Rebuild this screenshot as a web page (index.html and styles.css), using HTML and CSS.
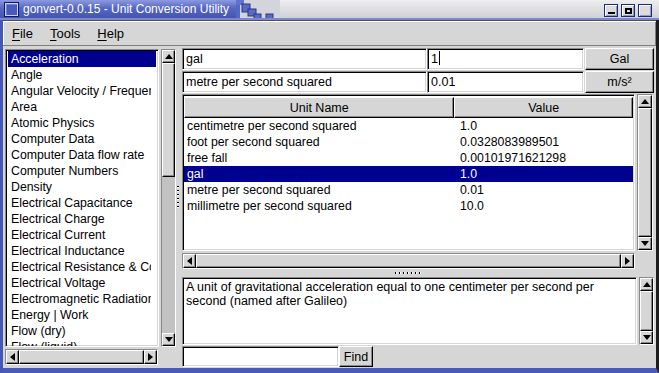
FILE: index.html
```html
<!DOCTYPE html>
<html lang="en">

<head>
    <meta charset="UTF-8">
    <meta name="viewport" content="width=device-width, initial-scale=1.0">
    <title>gonvert</title>
    <link rel="stylesheet" href="styles.css">
</head>

<body>
    <div class="window">
        <div class="titlebar">
            <div class="title-blue">
                <svg class="app-icon" width="15" height="15" viewBox="0 0 15 15">
                    <rect x="0.5" y="0.5" width="14" height="14" fill="#3a4aa8" stroke="#101860" />
                    <rect x="1.5" y="1.5" width="12" height="12" fill="#7080d8" stroke="#c8d0f4" />
                    <rect x="3" y="3" width="10" height="10" fill="#4a5abc" />
                </svg>
                <span class="title-text">gonvert-0.0.15 - Unit Conversion Utility</span>
            </div>
            <svg class="title-steps" width="44" height="20" viewBox="0 0 44 20">
                <rect x="0" y="0" width="44" height="20" fill="#d4d4dc" />
                <rect x="0" y="0" width="4" height="20" fill="#5666c4" />
                <rect x="0" y="0" width="8" height="5" fill="#6272cc" />
                <rect x="6" y="4" width="8" height="8" fill="#5a6ac6" stroke="#2a3680" />
                <rect x="12" y="9" width="8" height="7" fill="#5a6ac6" stroke="#2a3680" />
                <rect x="18" y="14" width="7" height="5" fill="#5a6ac6" stroke="#2a3680" />
                <rect x="30" y="14" width="7" height="5" fill="#5a6ac6" stroke="#2a3680" />
                <rect x="0" y="18" width="44" height="2" fill="#7a88cc" />
            </svg>
            <div class="title-grey">
                <span class="wbtn"><i class="glyph-min"></i></span>
                <span class="wbtn"><i class="glyph-max"></i></span>
                <span class="wbtn"></span>
            </div>
        </div>

        <div class="menubar">
            <span class="menu-item"><u>F</u>ile</span>
            <span class="menu-item"><u>T</u>ools</span>
            <span class="menu-item"><u>H</u>elp</span>
        </div>

        <div class="main">
            <div class="cat-pane">
                <div class="cat-top">
                    <ul class="list sunken">
                        <li class="selected"><span>Acceleration</span></li>
                        <li><span>Angle</span></li>
                        <li><span>Angular Velocity / Frequency</span></li>
                        <li><span>Area</span></li>
                        <li><span>Atomic Physics</span></li>
                        <li><span>Computer Data</span></li>
                        <li><span>Computer Data flow rate</span></li>
                        <li><span>Computer Numbers</span></li>
                        <li><span>Density</span></li>
                        <li><span>Electrical Capacitance</span></li>
                        <li><span>Electrical Charge</span></li>
                        <li><span>Electrical Current</span></li>
                        <li><span>Electrical Inductance</span></li>
                        <li><span>Electrical Resistance &amp; Conductance</span></li>
                        <li><span>Electrical Voltage</span></li>
                        <li><span>Electromagnetic Radiation</span></li>
                        <li><span>Energy | Work</span></li>
                        <li><span>Flow (dry)</span></li>
                        <li><span>Flow (liquid)</span></li>
                    </ul>
                    <div class="vscroll cat-vscroll">
                        <span class="sb-btn"><i class="tri-up"></i></span>
                        <span class="thumb cat-thumb"></span>
                        <span class="trough"></span>
                        <span class="sb-btn"><i class="tri-down"></i></span>
                    </div>
                </div>
                <div class="hscroll cat-hscroll">
                    <span class="sb-btn"><i class="tri-left"></i></span>
                    <span class="thumb"></span>
                    <span class="sb-btn"><i class="tri-right"></i></span>
                </div>
            </div>

            <div class="vhandle"><span class="dots-v"></span></div>

            <div class="right-pane">
                <div class="conv-row">
                    <div class="entry name-entry">gal</div>
                    <div class="entry value-entry">1<span class="caret"></span></div>
                    <div class="button unit-btn">Gal</div>
                </div>
                <div class="conv-row">
                    <div class="entry name-entry">metre per second squared</div>
                    <div class="entry value-entry">0.01</div>
                    <div class="button unit-btn">m/s²</div>
                </div>

                <div class="table-wrap">
                    <div class="table-box sunken">
                        <div class="thead">
                            <span class="th col-name">Unit Name</span>
                            <span class="th col-value">Value</span>
                        </div>
                        <div class="tr"><span class="col-name">centimetre per second squared</span><span class="col-value">1.0</span></div>
                        <div class="tr"><span class="col-name">foot per second squared</span><span class="col-value">0.0328083989501</span></div>
                        <div class="tr"><span class="col-name">free fall</span><span class="col-value">0.00101971621298</span></div>
                        <div class="tr selected"><span class="col-name">gal</span><span class="col-value">1.0</span></div>
                        <div class="tr"><span class="col-name">metre per second squared</span><span class="col-value">0.01</span></div>
                        <div class="tr"><span class="col-name">millimetre per second squared</span><span class="col-value">10.0</span></div>
                    </div>
                    <div class="vscroll table-vscroll">
                        <span class="sb-btn"><i class="tri-up"></i></span>
                        <span class="thumb"></span>
                        <span class="sb-btn"><i class="tri-down"></i></span>
                    </div>
                </div>
                <div class="hscroll table-hscroll">
                    <span class="sb-btn"><i class="tri-left"></i></span>
                    <span class="thumb"></span>
                    <span class="sb-btn"><i class="tri-right"></i></span>
                </div>

                <div class="hhandle"><span class="dots-h"></span></div>

                <div class="desc-wrap">
                    <div class="desc sunken">A unit of gravitational acceleration equal to one centimeter per second per second (named after Galileo)</div>
                    <div class="vscroll desc-vscroll">
                        <span class="sb-btn"><i class="tri-up"></i></span>
                        <span class="thumb"></span>
                        <span class="sb-btn"><i class="tri-down"></i></span>
                    </div>
                </div>

                <div class="find-row">
                    <div class="entry find-entry"></div>
                    <div class="button find-btn">Find</div>
                </div>
            </div>
        </div>
    </div>
</body>

</html>
```

FILE: styles.css
```css
* {
    margin: 0;
    padding: 0;
    box-sizing: border-box;
}

body {
    width: 659px;
    height: 373px;
    overflow: hidden;
    background: #1c1c1c;
    font-family: "Liberation Sans", Arial, sans-serif;
    font-size: 12px;
    color: #000;
}

.window {
    width: 659px;
    height: 373px;
    display: flex;
    flex-direction: column;
    background: #d6d6d6;
    border-left: 3px solid #4656b4;
    border-right: 3px solid #1c1c1c;
    border-bottom: 5px solid #4a5ab8;
}

/* title bar */
.titlebar {
    flex: 0 0 20px;
    display: flex;
    margin-left: -3px;
    margin-right: -3px;
}

.title-blue {
    flex: 0 0 236px;
    display: flex;
    align-items: center;
    padding-left: 4px;
    overflow: hidden;
    background: linear-gradient(#8c9ae0, #5666c4 45%, #4454b0);
    border-bottom: 2px solid #7a88cc;
}

.app-icon {
    display: block;
    flex: 0 0 15px;
    margin-right: 4px;
}

.title-text {
    flex: 0 0 auto;
    color: #fff;
    font-size: 12px;
    white-space: nowrap;
}

.title-steps {
    display: block;
    flex: 0 0 44px;
}

.title-grey {
    flex: 1;
    display: flex;
    justify-content: flex-end;
    gap: 3px;
    padding: 4px 7px 0 0;
    background: linear-gradient(#eeeeee, #d0d0d8);
    border-bottom: 2px solid #7a88cc;
}

.wbtn {
    width: 14px;
    height: 13px;
    display: flex;
    align-items: center;
    justify-content: center;
    background: #dcdcdc;
    border: 1px solid #1c2a78;
    box-shadow: inset 1px 1px #fff, inset -1px -1px #9098c0;
}

.glyph-min {
    width: 7px;
    height: 2px;
    margin-top: 4px;
    background: #000;
}

.glyph-max {
    width: 7px;
    height: 6px;
    border: 2px solid #000;
}

/* menu */
.menubar {
    flex: 0 0 26px;
    display: flex;
    align-items: center;
    padding-left: 9px;
    border-top: 1px solid #505050;
    border-bottom: 1px solid #808080;
    box-shadow: inset 1px 1px #fff, inset -1px 0 #808080;
}

.menu-item {
    margin-right: 17px;
    font-size: 13px;
}

.menu-item u {
    text-decoration-thickness: 1px;
    text-underline-offset: 2px;
}

/* main */
.main {
    flex: 1;
    display: flex;
    padding: 1px 0 0 2px;
}

.cat-pane {
    width: 171px;
    display: flex;
    flex-direction: column;
    padding-top: 2px;
}

.cat-top {
    height: 298px;
    display: flex;
    gap: 2px;
}

.sunken {
    border: 1px solid;
    border-color: #8a8a8a #fff #fff #8a8a8a;
    box-shadow: inset 1px 1px #000, inset -1px -1px #d6d6d6;
}

.sb-btn,
.thumb,
.button,
.th {
    background: #d6d6d6;
    border: 1px solid;
    border-color: #fff #000 #000 #fff;
    box-shadow: inset -1px -1px #8a8a8a;
}

.list {
    width: 154px;
    list-style: none;
    background: #fff;
    overflow: hidden;
    padding: 1px 2px;
}

.list li {
    height: 16px;
    line-height: 16px;
    padding-left: 3px;
    white-space: nowrap;
    font-size: 12.3px;
}

.list li span {
    display: block;
    width: 140px;
    overflow: hidden;
}

.selected {
    background: #000090;
    color: #fff;
}

/* scrollbars */
.vscroll {
    width: 15px;
    display: flex;
    flex-direction: column;
    background: #c2c2c2;
    border: 1px solid;
    border-color: #8a8a8a #fff #fff #8a8a8a;
}

.hscroll {
    height: 16px;
    display: flex;
    background: #c2c2c2;
    border: 1px solid;
    border-color: #8a8a8a #fff #fff #8a8a8a;
}

.sb-btn {
    flex: 0 0 13px;
    display: flex;
    align-items: center;
    justify-content: center;
}

.vscroll .sb-btn {
    height: 13px;
}

.hscroll .sb-btn {
    width: 14px;
}

.thumb {
    flex: 1;
}

.vscroll .cat-thumb {
    flex: 0 0 114px;
}

.trough {
    flex: 1;
}

.tri-up,
.tri-down,
.tri-left,
.tri-right {
    width: 0;
    height: 0;
    border: 4px solid transparent;
}

.tri-up {
    border-bottom: 5px solid #000;
    border-top-width: 0;
}

.tri-down {
    border-top: 5px solid #000;
    border-bottom-width: 0;
}

.tri-left {
    border-right: 5px solid #000;
    border-left-width: 0;
}

.tri-right {
    border-left: 5px solid #000;
    border-right-width: 0;
}

.cat-hscroll {
    width: 153px;
    margin-top: 2px;
}

/* pane handles */
.vhandle {
    width: 6px;
    display: flex;
    align-items: center;
    justify-content: flex-start;
    padding: 0 0 20px 1px;
}

.dots-v {
    width: 2px;
    height: 24px;
    background: repeating-linear-gradient(#000 0 1px, #fff 1px 2px, transparent 2px 4px);
}

.hhandle {
    height: 8px;
    display: flex;
    align-items: center;
    justify-content: center;
    padding-right: 20px;
}

.dots-h {
    width: 26px;
    height: 2px;
    background: repeating-linear-gradient(90deg, #000 0 1px, #fff 1px 2px, transparent 2px 4px);
}

/* right side */
.right-pane {
    width: 472px;
    display: flex;
    flex-direction: column;
    padding-top: 1px;
}

.conv-row {
    height: 22px;
    display: flex;
    margin-bottom: 1px;
}

.entry {
    background: #fff;
    border: 1px solid;
    border-color: #8a8a8a #fff #fff #8a8a8a;
    box-shadow: inset 1px 1px #000, inset -1px -1px #d6d6d6;
    padding: 2px 3px;
    line-height: 16px;
    white-space: nowrap;
    font-size: 12.5px;
}

.name-entry {
    width: 245px;
}

.value-entry {
    width: 157px;
}

.caret {
    display: inline-block;
    width: 1px;
    height: 14px;
    margin-left: 1px;
    vertical-align: -2px;
    background: #000;
}

.button {
    display: flex;
    align-items: center;
    justify-content: center;
    font-size: 12.5px;
}

.unit-btn {
    width: 69px;
    margin-left: 1px;
}

.table-wrap {
    height: 157px;
    display: flex;
    gap: 2px;
}

.table-box {
    width: 453px;
    background: #fff;
    padding: 2px 1px;
    overflow: hidden;
}

.thead {
    height: 21px;
    display: flex;
}

.th {
    display: flex;
    align-items: center;
    justify-content: center;
    font-size: 12.5px;
}

.th.col-name {
    width: 271px;
}

.th.col-value {
    width: 179px;
}

.tr {
    height: 16px;
    line-height: 16px;
    display: flex;
    white-space: nowrap;
    font-size: 12.3px;
}

.tr .col-name {
    width: 271px;
    padding-left: 3px;
}

.tr .col-value {
    padding-left: 5px;
}

.table-vscroll {
    width: 16px;
}

.table-hscroll {
    width: 453px;
    margin-top: 2px;
}

.desc-wrap {
    height: 68px;
    display: flex;
    gap: 2px;
}

.desc {
    width: 455px;
    background: #fff;
    padding: 2px 3px;
    line-height: 14px;
    font-size: 12.5px;
}

.find-row {
    height: 21px;
    display: flex;
    margin-top: 1px;
}

.find-entry {
    width: 157px;
}

.find-btn {
    width: 34px;
}
```
